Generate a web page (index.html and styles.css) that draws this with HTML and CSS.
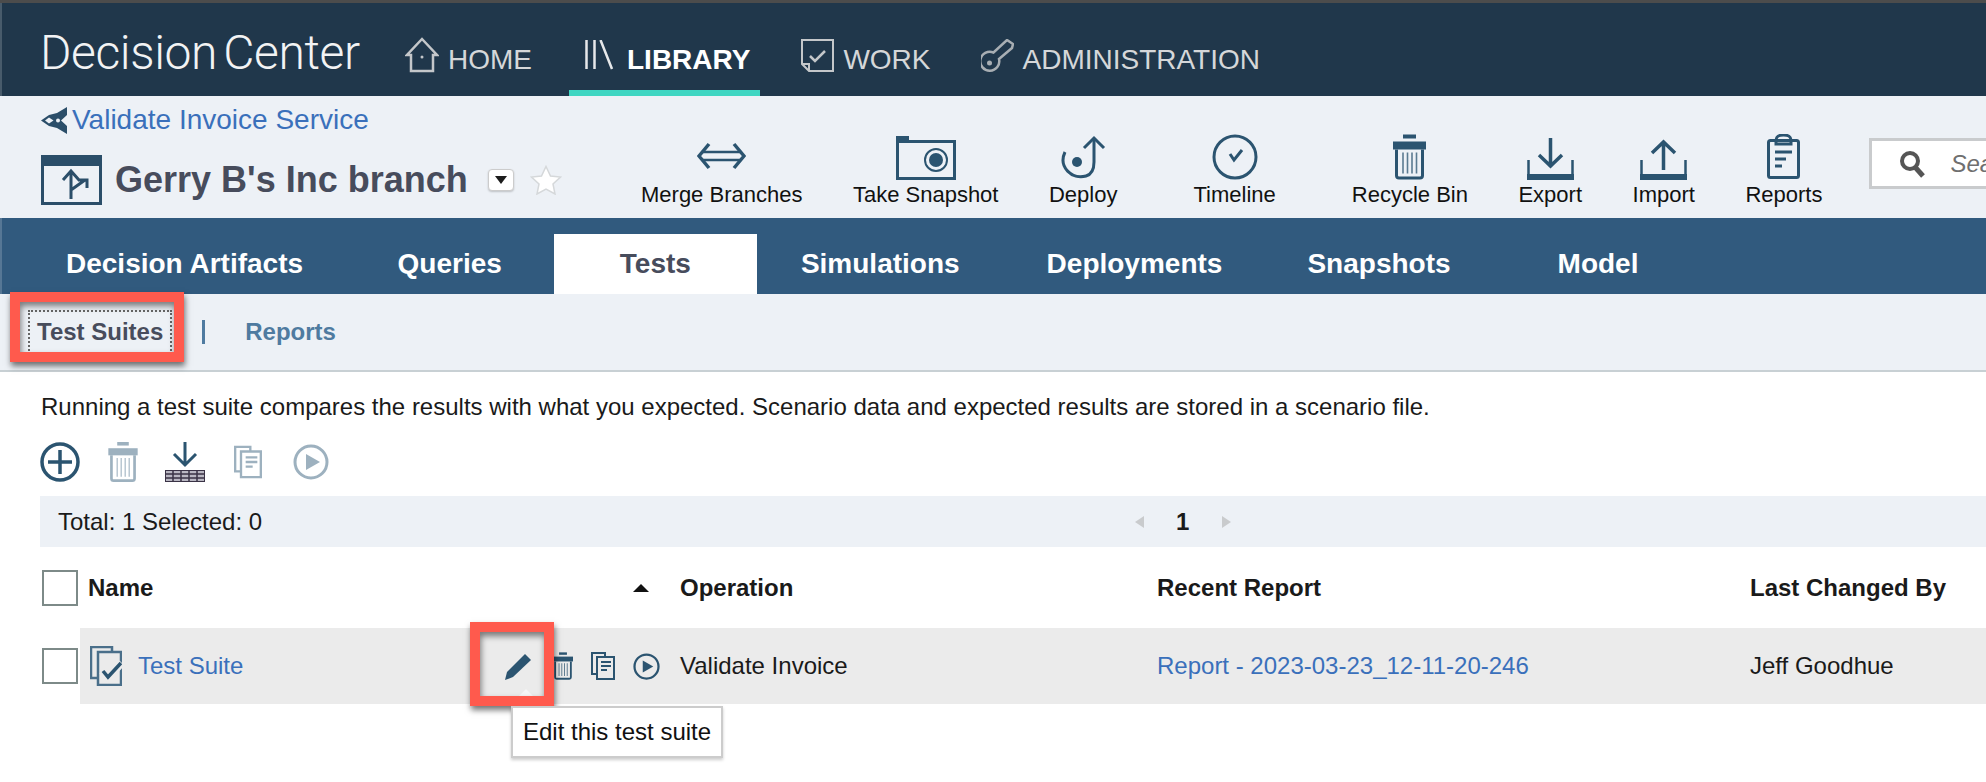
FILE: index.html
```html
<!DOCTYPE html>
<html lang="en">
<head>
<meta charset="utf-8">
<title>Decision Center</title>
<link rel="stylesheet" href="styles.css">
</head>
<body>
<svg class="defs" width="0" height="0" aria-hidden="true">
  <symbol id="trash" viewBox="0 0 33 45">
    <rect x="10" y="0" width="13" height="4" fill="currentColor"/>
    <rect x="0" y="7" width="33" height="8" fill="currentColor"/>
    <path d="M3.500 15V41q0 2.500 2.500 2.500H27q2.500 0 2.500-2.500V15" fill="none" stroke="currentColor" stroke-width="3"/>
    <path d="M10 18V39M14.500 18V39M19 18V39M23.500 18V39" stroke="currentColor" stroke-width="1.600" opacity=".75"/>
  </symbol>
  <symbol id="copy" viewBox="0 0 24 28">
    <path d="M14 5V1H1V22H6" fill="none" stroke="currentColor" stroke-width="2"/>
    <path d="M6 5H23V27H6Z" fill="none" stroke="currentColor" stroke-width="2"/>
    <path d="M10 10H20M10 14H20M10 18H16" stroke="currentColor" stroke-width="2"/>
  </symbol>
  <symbol id="play" viewBox="0 0 36 36">
    <circle cx="18" cy="18" r="16" fill="none" stroke="currentColor" stroke-width="3"/>
    <path d="M13 10L27 18L13 26Z" fill="currentColor"/>
  </symbol>
</svg>

<div class="app">
  <header class="nav">
    <div class="logo">Decision Center</div>
    <a class="nav-item nav-home">
      <svg width="34" height="36" viewBox="0 0 34 36"><path d="M17 2L32 18H28V34H6V18H2Z" fill="none" stroke="#c4c7ca" stroke-width="2.500"/><circle cx="17" cy="20" r="1.500" fill="#c4c7ca"/></svg>
      HOME
    </a>
    <a class="nav-item nav-active">
      <svg width="30" height="30" viewBox="0 0 30 30"><path d="M2.500 0V29M10.500 0V29M16.500 0L28 29" fill="none" stroke="#e6e8ea" stroke-width="2.500"/></svg>
      LIBRARY
    </a>
    <a class="nav-item nav-work">
      <svg width="33" height="33" viewBox="0 0 33 33"><path d="M1 1H32V32H8L1 25Z" fill="none" stroke="#c4c7ca" stroke-width="2"/><path d="M1 25H8V32" fill="none" stroke="#c4c7ca" stroke-width="2"/><path d="M9 17L14 22L24 12" fill="none" stroke="#c4c7ca" stroke-width="2.500"/></svg>
      WORK
    </a>
    <a class="nav-item">
      <svg width="33" height="33" viewBox="0 0 33 33"><path d="M26 1L32 5L31 9L18 20A9.500 9.500 0 1 1 12.500 13.500Z" fill="none" stroke="#a8aeb3" stroke-width="2.500"/><circle cx="8.500" cy="24" r="2.500" fill="#a8aeb3"/></svg>
      ADMINISTRATION
    </a>
  </header>

  <section class="context">
    <div class="context-left">
      <div class="crumb">
        <svg width="28" height="27" viewBox="0 0 28 27"><path d="M27 0L17 6L9 8L1 13.500L9 19L17 21L27 27V19L21 13.500L27 8Z" fill="#2b4e69"/><path d="M9 10.500L13.500 13.500L9 16.500L5 13.500Z" fill="#edf1f6"/><circle cx="18" cy="13.500" r="2" fill="#edf1f6"/></svg>
        <a class="link crumb-link">Validate Invoice Service</a>
      </div>
      <div class="branch">
        <svg width="61" height="50" viewBox="0 0 61 50"><rect x="1.500" y="1.500" width="58" height="47" fill="none" stroke="#2b4e69" stroke-width="3"/><rect x="0" y="0" width="61" height="11" fill="#2b4e69"/><path d="M30 44V17M22 25L30 16L38 25M30 35L44 25M37 25H46V33" fill="none" stroke="#2b4e69" stroke-width="3"/></svg>
        <h1 class="branch-title">Gerry B's Inc branch</h1>
        <span class="dropdown"><span class="dropdown-arrow"></span></span>
        <svg class="star" width="32" height="30" viewBox="0 0 32 30"><path d="M16 1.500L20.500 11L30.500 12L23 19L25 29L16 24L7 29L9 19L1.500 12L11.500 11Z" fill="#fff" stroke="#d5d8da" stroke-width="1.500"/></svg>
      </div>
    </div>
    <div class="tools">
      <div class="tool">
        <svg width="49" height="46" viewBox="0 0 49 46"><path d="M12 10L2 22L12 34M37 10L47 22L37 34" fill="none" stroke="#2b5470" stroke-width="3.500"/><path d="M5 18H44M5 26H44" stroke="#2b5470" stroke-width="2.500"/></svg>
        <span>Merge Branches</span>
      </div>
      <div class="tool">
        <svg width="60" height="46" viewBox="0 0 60 46"><rect x="1.500" y="7.500" width="57" height="37" fill="none" stroke="#2b5470" stroke-width="3"/><rect x="0" y="2" width="13" height="7" fill="#2b5470"/><circle cx="40" cy="26" r="11" fill="none" stroke="#2b5470" stroke-width="2"/><circle cx="40" cy="26" r="7" fill="#2b5470"/></svg>
        <span>Take Snapshot</span>
      </div>
      <div class="tool">
        <svg width="46" height="46" viewBox="0 0 46 46"><path d="M5 18C-2 33 12 46 26 42C33 40 34 34 34 28V5" fill="none" stroke="#2b5470" stroke-width="3"/><path d="M24 14L34 4L44 14" fill="none" stroke="#2b5470" stroke-width="3"/><circle cx="17" cy="28" r="5" fill="#2b5470"/></svg>
        <span>Deploy</span>
      </div>
      <div class="tool tool-spaced">
        <svg width="46" height="46" viewBox="0 0 46 46"><circle cx="23" cy="23" r="21" fill="none" stroke="#2b5470" stroke-width="3"/><path d="M18 20L22 26L30 16" fill="none" stroke="#2b5470" stroke-width="3"/></svg>
        <span>Timeline</span>
      </div>
      <div class="tool">
        <svg class="icon-dark" width="33" height="46"><use href="#trash"/></svg>
        <span>Recycle Bin</span>
      </div>
      <div class="tool">
        <svg width="47" height="46" viewBox="0 0 47 46"><path d="M1.500 26V42H45.500V26" fill="none" stroke="#2b5470" stroke-width="2.500"/><rect x="0" y="40" width="47" height="6" fill="#2b5470"/><path d="M23.500 4V32M12 21L23.500 32L35 21" fill="none" stroke="#2b5470" stroke-width="3.500"/></svg>
        <span>Export</span>
      </div>
      <div class="tool">
        <svg width="47" height="46" viewBox="0 0 47 46"><path d="M1.500 26V42H45.500V26" fill="none" stroke="#2b5470" stroke-width="2.500"/><rect x="0" y="40" width="47" height="6" fill="#2b5470"/><path d="M23.500 36V9M12 19L23.500 8L35 19" fill="none" stroke="#2b5470" stroke-width="3.500"/></svg>
        <span>Import</span>
      </div>
      <div class="tool">
        <svg width="33" height="46" viewBox="0 0 33 46"><rect x="1.500" y="6.500" width="30" height="37" rx="2" fill="none" stroke="#2b5470" stroke-width="3"/><path d="M9 7C9 2 12 1 16.500 1S24 2 24 7V10H9Z" fill="none" stroke="#2b5470" stroke-width="3"/><path d="M8 18H25M8 25H19M8 32H15" stroke="#2b5470" stroke-width="3"/></svg>
        <span>Reports</span>
      </div>
    </div>
    <div class="search">
      <svg width="26" height="28" viewBox="0 0 26 28"><circle cx="11" cy="11" r="8" fill="none" stroke="#555" stroke-width="4"/><path d="M16 17L24 26" stroke="#555" stroke-width="5"/></svg>
      <span class="search-text">Search</span>
    </div>
  </section>

  <nav class="tabs">
    <a class="tab tab-first">Decision Artifacts</a>
    <a class="tab tab-second">Queries</a>
    <a class="tab tab-active">Tests</a>
    <a class="tab tab-sim">Simulations</a>
    <a class="tab tab-dep">Deployments</a>
    <a class="tab tab-spaced">Snapshots</a>
    <a class="tab">Model</a>
  </nav>

  <div class="subtabs">
    <a class="subtab subtab-active">Test Suites</a>
    <span class="subtab-sep"></span>
    <a class="subtab">Reports</a>
    <div class="callout callout-tab"></div>
  </div>

  <p class="desc">Running a test suite compares the results with what you expected. Scenario data and expected results are stored in a scenario file.</p>

  <div class="actions">
    <svg class="icon-dark action-add" width="40" height="40" viewBox="0 0 40 40"><circle cx="20" cy="20" r="18" fill="none" stroke="currentColor" stroke-width="3.500"/><path d="M20 8V32M8 20H32" stroke="currentColor" stroke-width="3.500"/></svg>
    <svg class="icon-muted action-trash" width="32" height="40"><use href="#trash"/></svg>
    <svg class="action-import" width="40" height="40" viewBox="0 0 40 40"><path d="M20 0V22M9 12L20 23L31 12" fill="none" stroke="#2b5470" stroke-width="3"/><rect x="0.500" y="28.500" width="39" height="11" fill="#b9b7c2" stroke="#3a3346"/><path d="M0 32H40M0 36H40M8 28V40M16 28V40M24 28V40M32 28V40" stroke="#3a3346" stroke-width="1.500"/></svg>
    <svg class="icon-muted action-copy" width="28" height="36"><use href="#copy"/></svg>
    <svg class="icon-muted action-play" width="36" height="36"><use href="#play"/></svg>
  </div>

  <div class="totals">
    <span class="totals-text">Total: 1 Selected: 0</span>
    <div class="pager">
      <span class="pager-prev"></span>
      <b>1</b>
      <span class="pager-next"></span>
    </div>
  </div>

  <div class="row row-head">
    <span class="check"></span>
    <div class="row-body">
      <div class="cell-name"><b>Name</b><span class="sort"></span></div>
      <b>Operation</b>
      <b>Recent Report</b>
      <b>Last Changed By</b>
    </div>
  </div>

  <div class="row row-data">
    <span class="check"></span>
    <div class="row-body">
      <div class="cell-name">
        <svg class="suite-icon" width="32" height="40" viewBox="0 0 32 40"><path d="M22 6V1H1V32H8" fill="none" stroke="#4a6f8a" stroke-width="2.500"/><path d="M8 6H31V39H8Z" fill="none" stroke="#4a6f8a" stroke-width="2.500"/><path d="M12 25L18 32L32 17" fill="none" stroke="#ebebeb" stroke-width="7"/><path d="M13 25L18 31L31 17" fill="none" stroke="#2b5470" stroke-width="3.500"/></svg>
        <a class="link suite-link">Test Suite</a>
        <div class="row-actions">
          <svg class="pencil" width="28" height="27" viewBox="0 0 28 27"><path d="M21 1L27 7L9 24L1 27L3 19Z" fill="#2b5470"/></svg>
          <svg class="icon-dark row-trash" width="20" height="28"><use href="#trash"/></svg>
          <svg class="icon-dark row-copy" width="24" height="28"><use href="#copy"/></svg>
          <svg class="icon-dark row-play" width="27" height="27"><use href="#play"/></svg>
        </div>
      </div>
      <span>Validate Invoice</span>
      <a class="link">Report - 2023-03-23_12-11-20-246</a>
      <span>Jeff Goodhue</span>
      <span class="tooltip-tail"></span>
      <div class="callout callout-edit"></div>
      <div class="tooltip">Edit this test suite</div>
    </div>
  </div>
</div>
</body>
</html>
```
FILE: styles.css
```css
* { box-sizing: border-box; }
html, body { margin: 0; height: 100%; background: #fff; }
body { font-family: "Liberation Sans", Arial, sans-serif; color: #1a1a1a; overflow: hidden; }
.defs { position: absolute; }
.app { width: 1986px; height: 782px; overflow: hidden; }
.link { color: #3a70bb; }

/* top bar */
.nav {
  height: 96px;
  background: #20374b;
  border-top: 3px solid #4c4c4c;
  box-shadow: inset 2px 0 0 rgba(255,255,255,.18);
  display: flex;
  align-items: center;
  padding-left: 40px;
}
.logo {
  font-family: Roboto, "Liberation Sans", sans-serif;
  font-weight: 300;
  font-size: 48px;
  letter-spacing: -.4px;
  word-spacing: -5px;
  color: #f2f3f4;
  width: 365px;
  flex: none;
  margin-top: 5px;
  white-space: nowrap;
}
.nav-item {
  height: 93px;
  display: flex;
  align-items: center;
  gap: 9px;
  font-size: 28px;
  color: #d5d7d9;
  padding-top: 21px;
  margin-right: 41px;
}
.nav-item svg { margin-top: -10px; flex: none; }
.nav-home { margin-right: 37px; }
.nav-work { margin-right: 50px; gap: 9px; }
.nav-active {
  color: #fff;
  font-weight: 700;
  padding: 27px 10px 0 15px;
  gap: 13px;
  border-bottom: 6px solid #3fd6c2;
}

/* context header */
.context { height: 122px; background: #edf1f6; display: flex; align-items: flex-end; }
.context-left { width: 641px; height: 100%; padding: 11px 0 0 40px; flex: none; }
.crumb { display: flex; align-items: center; gap: 4px; height: 26px; font-size: 28px; }
.branch { display: flex; align-items: center; margin-top: 22px; height: 50px; margin-left: 1px; }
.branch-title { margin: 0 0 0 13px; font-size: 36px; font-weight: 700; color: #474c5c; white-space: nowrap; }
.dropdown {
  width: 26px; height: 22px; margin-left: 20px; background: #fff; border: 1px solid #ccc; border-radius: 4px;
  display: flex; align-items: center; justify-content: center; box-shadow: 0 1px 2px rgba(0,0,0,.2);
}
.dropdown-arrow { border: 6px solid transparent; border-top: 8px solid #1c1c1c; border-bottom: 0; }
.star { margin-left: 16px; }

.tools { display: flex; gap: 50.500px; padding-bottom: 12px; flex: none; }
.tool { display: flex; flex-direction: column; align-items: center; gap: 4px; font-size: 22px; line-height: 22px; color: #111; white-space: nowrap; }
.tool-spaced { margin: 0 25.500px; }
.icon-dark { color: #2b5470; }
.icon-muted { color: #9db1bf; }
.search {
  flex: none; width: 300px; height: 51px; margin: 0 0 29px 47px; background: #fff; border: 3px solid #c9cbcd;
  display: flex; align-items: center; padding-left: 27px; gap: 25px;
}
.search-text { font-style: italic; font-size: 24px; color: #6f6f6f; }

/* tabs */
.tabs { height: 76px; background: #315a7e; box-shadow: inset 2px 0 0 rgba(255,255,255,.18); display: flex; align-items: flex-end; }
.tab { height: 60px; padding: 0 44px; display: flex; align-items: center; font-size: 28px; font-weight: 700; color: #fff; white-space: nowrap; }
.tab-first { margin-left: 22px; margin-right: 6.500px; }
.tab-second { margin-right: 8px; }
.tab-active { background: #fff; color: #474c5c; padding: 0 66px; }
.tab-sim { padding-right: 43px; }
.tab-dep { padding-right: 41px; }
.tab-spaced { margin-right: 19px; }

/* subtabs */
.subtabs { position: relative; height: 78px; background: #edf1f6; border-bottom: 2px solid #c8d0d4; display: flex; align-items: center; padding-left: 28px; font-size: 24px; font-weight: 700; color: #4f7ba0; }
.subtab { white-space: nowrap; }
.subtab-active { height: 44px; padding: 0 7px; display: flex; align-items: center; border: 2px dotted #666; color: #474c5c; }
.subtab-sep { width: 3px; height: 24px; background: #4f7ba0; margin: 0 40px 0 30px; }
.callout { position: absolute; border: 10px solid #ff5a4d; box-shadow: 1px 4px 6px rgba(0,0,0,.55), inset 1px 4px 6px rgba(0,0,0,.5); }
.callout-tab { left: 10px; top: -2px; width: 174px; height: 70px; }
.callout-edit { left: 390px; top: -6px; width: 84px; height: 84px; }

/* body */
.desc { margin: 0; padding: 24px 0 0 41px; font-size: 24px; line-height: 22px; }
.actions { height: 40px; margin-top: 24px; display: flex; align-items: center; padding-left: 40px; }
.action-trash { margin-left: 27px; }
.action-import { margin-left: 26px; }
.action-copy { margin-left: 29px; }
.action-play { margin-left: 31px; }
.totals { height: 51px; margin: 14px 0 0 40px; background: #edf1f6; display: flex; align-items: center; padding-left: 18px; font-size: 24px; }
.totals-text { width: 1077px; flex: none; }
.pager { display: flex; align-items: center; }
.pager-prev, .pager-next { width: 0; height: 0; border: 6px solid transparent; }
.pager-prev { border-right: 9px solid #c9cbcd; border-left: 0; }
.pager-next { border-left: 9px solid #c9cbcd; border-right: 0; }
.pager b { margin: 0 33px 0 32px; }

.row { display: flex; align-items: stretch; font-size: 24px; }
.row-head { height: 81px; }
.row-data { height: 76px; }
.check { width: 36px; height: 36px; margin: auto 2px auto 42px; flex: none; background: #fff; border: 2px solid #7d8a88; }
.row-body { position: relative; flex: 1; display: grid; grid-template-columns: 600px 477px 593px 1fr; align-items: center; }
.row-data .row-body { background: #ebebeb; }
.cell-name { display: flex; align-items: center; padding-left: 8px; }
.cell-name b { width: 545px; flex: none; }
.sort { border: 8px solid transparent; border-bottom: 8px solid #111; border-top: 0; }
.suite-icon { margin-left: 2px; flex: none; }
.suite-link { margin-left: 16px; width: 366px; flex: none; }
.row-actions { display: flex; align-items: center; }
.row-trash { margin-left: 21px; }
.row-copy { margin-left: 18px; }
.row-play { margin-left: 18px; }
.tooltip-tail { position: absolute; left: 438px; top: 61px; border: 8px solid transparent; border-bottom: 8px solid #f6f6f6; border-top: 0; }
.tooltip {
  position: absolute; left: 431px; top: 78px; width: 212px; height: 52px; background: #fff; border: 2px solid #ccc;
  box-shadow: 0 2px 3px rgba(0,0,0,.2); display: flex; align-items: center; padding-left: 10px; color: #111; white-space: nowrap;
}
```
